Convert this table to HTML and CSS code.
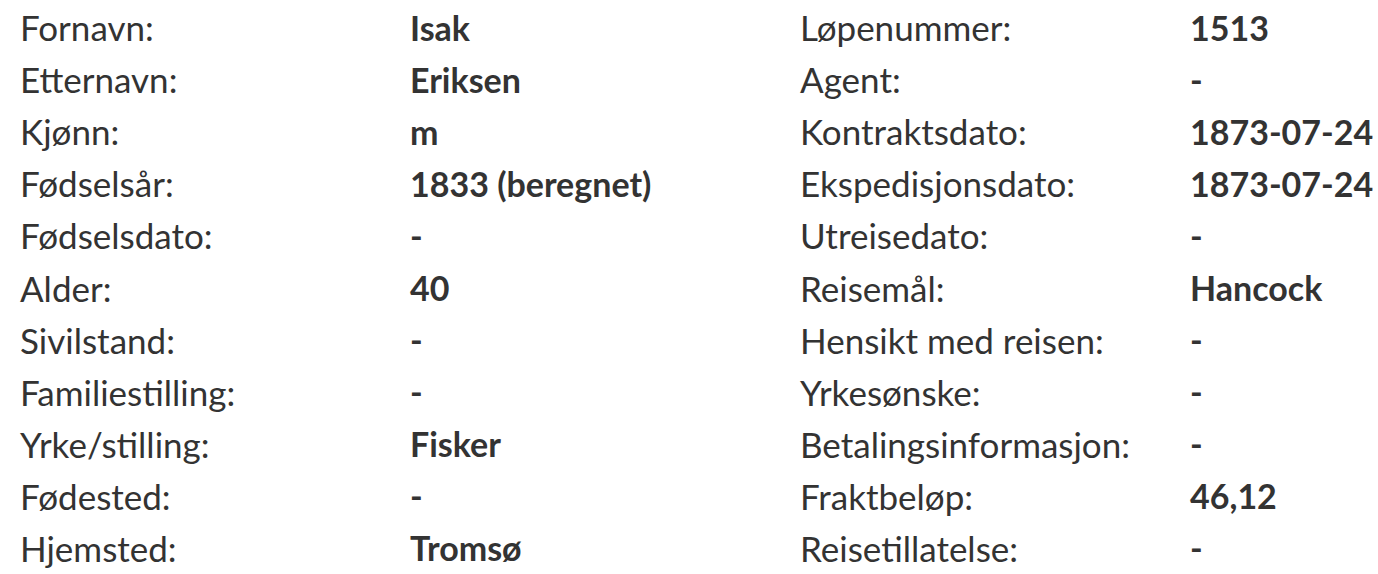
FILE: index.html
```html
<!DOCTYPE html>
<html lang="no">
<head>
<meta charset="utf-8">
<link rel="stylesheet" href="styles.css">
</head>
<body>
<div class="info">
  <dl class="grid">
    <dt>Fornavn:</dt><dd>Isak</dd><dt>Løpenummer:</dt><dd>1513</dd>
    <dt>Etternavn:</dt><dd>Eriksen</dd><dt>Agent:</dt><dd>-</dd>
    <dt>Kjønn:</dt><dd>m</dd><dt>Kontraktsdato:</dt><dd>1873-07-24</dd>
    <dt>Fødselsår:</dt><dd>1833 (beregnet)</dd><dt>Ekspedisjonsdato:</dt><dd>1873-07-24</dd>
    <dt>Fødselsdato:</dt><dd>-</dd><dt>Utreisedato:</dt><dd>-</dd>
    <dt>Alder:</dt><dd>40</dd><dt>Reisemål:</dt><dd>Hancock</dd>
    <dt>Sivilstand:</dt><dd>-</dd><dt>Hensikt med reisen:</dt><dd>-</dd>
    <dt>Familiestilling:</dt><dd>-</dd><dt>Yrkesønske:</dt><dd>-</dd>
    <dt>Yrke/stilling:</dt><dd>Fisker</dd><dt>Betalingsinformasjon:</dt><dd>-</dd>
    <dt>Fødested:</dt><dd>-</dd><dt>Fraktbeløp:</dt><dd>46,12</dd>
    <dt>Hjemsted:</dt><dd>Tromsø</dd><dt>Reisetillatelse:</dt><dd>-</dd>
  </dl>
</div>
</body>
</html>
```

FILE: styles.css
```css
html, body {
  margin: 0;
  padding: 0;
  background: #ffffff;
  overflow: hidden;
}
.info {
  padding: 1px 0 0 20px;
  font-family: Lato, "Liberation Sans", sans-serif;
  font-size: 35px;
  color: #333333;
}
.grid {
  margin: 0;
  display: grid;
  grid-template-columns: 390px 390px 390px 1fr;
  grid-auto-rows: 52.1px;
  align-items: center;
  white-space: nowrap;
}
.grid dt {
  margin: 0;
  font-weight: 400;
}
.grid dd {
  margin: 0;
  font-weight: 700;
  font-size: 34px;
}
```
